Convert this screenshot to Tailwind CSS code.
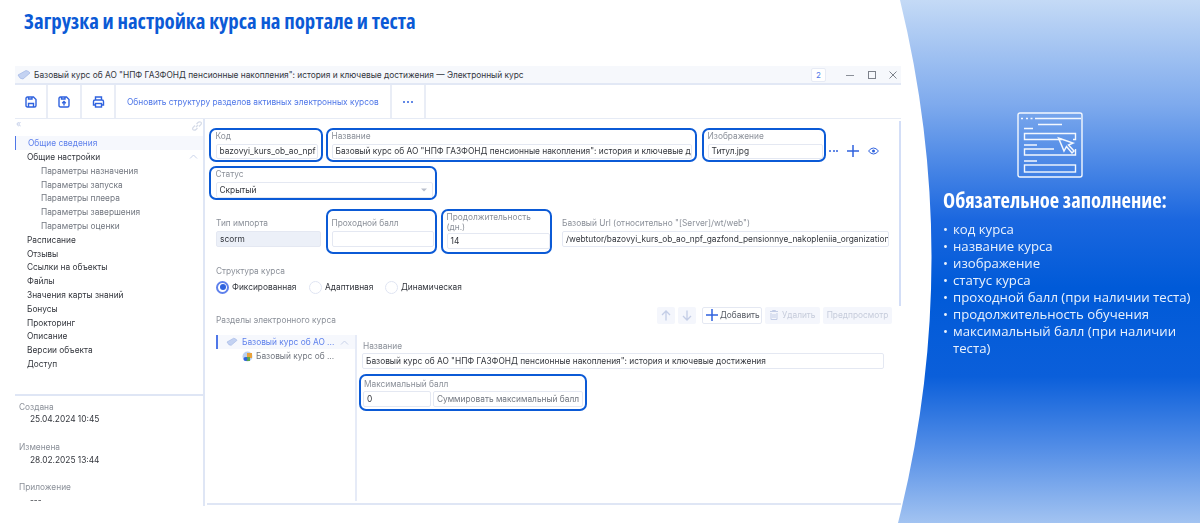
<!DOCTYPE html>
<html lang="ru"><head><meta charset="utf-8"><script src="https://cdn.jsdelivr.net/npm/@tailwindcss/browser@4"></script></head>
<body class="m-0">
<div class="relative w-[1200px] h-[523px] overflow-hidden bg-white font-['Inter','Liberation_Sans',sans-serif] text-[8.33px] leading-[14px] text-[#33363d]">
  <h1 class="absolute left-[24px] top-[7px] m-0 font-['Open_Sans',sans-serif] font-bold text-[20.8px] leading-[28px] text-[#0b5ad6] whitespace-nowrap [font-stretch:75%]">Загрузка и настройка курса на портале и теста</h1>

  <div class="absolute left-[15px] top-[66px] w-[886px] h-[440px] flex flex-col blur-[0.3px]">
    <!-- title bar -->
    <div class="h-[19px] shrink-0 bg-[#f6f8fc] border-b-2 border-[#e2e8f5] flex items-center">
      <svg class="ml-[2px] w-[14px] h-[12px]" viewBox="0 0 14 12"><path d="M1 6 L9 1.5 Q12 2 13 4 L6 10 Q3 10.5 1 6Z" fill="#c3d2f2" stroke="#9fb4e4" stroke-width=".7"/></svg>
      <span class="ml-[3px] text-[#33363d] whitespace-nowrap">Базовый курс об АО "НПФ ГАЗФОНД пенсионные накопления": история и ключевые достижения — Электронный курс</span>
      <div class="ml-auto mr-[2px] flex items-center">
        <span class="w-[15px] h-[14px] mr-[19px] flex items-center justify-center bg-white border border-[#e7ebf5] rounded-[2px] text-[#4f77e8] text-[8px]">2</span>
        <svg class="w-[10px] h-[10px] mr-[12px]" viewBox="0 0 10 10"><path d="M1 5.5H9" stroke="#8b9099" fill="none"/></svg>
        <svg class="w-[10px] h-[10px] mr-[11px]" viewBox="0 0 10 10"><rect x="1.5" y="1.5" width="7" height="7" stroke="#7d828b" fill="none"/></svg>
        <svg class="w-[10px] h-[10px] mr-[1px]" viewBox="0 0 10 10"><path d="M1.5 1.5L8.5 8.5M8.5 1.5L1.5 8.5" stroke="#7d828b" fill="none"/></svg>
      </div>
    </div>
    <!-- toolbar -->
    <div class="h-[34px] shrink-0 border-b border-[#e6ebf5] flex items-stretch text-[#4f77e8]">
      <div class="w-[33px] border-r-2 border-[#e9edf6] flex items-center justify-center">
        <svg class="w-[12px] h-[12px]" viewBox="0 0 12 12" fill="none" stroke="#2f62de" stroke-width="1.4"><path d="M1 2.5Q1 1 2.5 1H8.5L11 3.5V9.5Q11 11 9.5 11H2.5Q1 11 1 9.5Z"/><path d="M3.5 11V7.5H8.5V11M3.5 1V3H7V1"/></svg>
      </div>
      <div class="w-[34px] border-r-2 border-[#e9edf6] flex items-center justify-center">
        <svg class="w-[12px] h-[12px]" viewBox="0 0 12 12" fill="none" stroke="#2f62de" stroke-width="1.4"><path d="M1 2.5Q1 1 2.5 1H8.5L11 3.5V9.5Q11 11 9.5 11H2.5Q1 11 1 9.5Z"/><path d="M3.5 1V3H7V1M6 9.5V5.5M4.2 7.2L6 5.500L7.800 7.200"/></svg>
      </div>
      <div class="w-[34px] border-r-2 border-[#e9edf6] flex items-center justify-center">
        <svg class="w-[13px] h-[12px]" viewBox="0 0 13 12" fill="none" stroke="#2f62de" stroke-width="1.4"><path d="M3.5 4V1H9.5V4M3.5 9H1.5V5.5Q1.5 4 3 4H10Q11.5 4 11.5 5.5V9H9.5"/><rect x="3.5" y="7.5" width="6" height="3.5"/></svg>
      </div>
      <div class="w-[276px] border-r-2 border-[#e9edf6] flex items-center pl-[11px] whitespace-nowrap">Обновить структуру разделов активных электронных курсов</div>
      <div class="w-[34px] border-r-2 border-[#e9edf6] flex items-center justify-center gap-[2px]">
        <i class="w-[2px] h-[2px] bg-[#2f62de] rounded-full"></i><i class="w-[2px] h-[2px] bg-[#2f62de] rounded-full"></i><i class="w-[2px] h-[2px] bg-[#2f62de] rounded-full"></i>
      </div>
    </div>
    <!-- body -->
    <div class="flex-1 flex min-h-0">
      <!-- sidebar -->
      <aside class="w-[190px] shrink-0 border-r-2 border-[#dfe6f5] flex flex-col overflow-hidden">
        <div class="h-[17px] shrink-0 relative">
          <span class="absolute left-[1px] top-[-2px] text-[#c2cde8] text-[9px]">«</span>
          <svg class="absolute left-[176px] top-[1px] w-[12px] h-[12px]" viewBox="0 0 12 12" fill="none" stroke="#d5dbe8" stroke-width="1.2"><path d="M5 7L7 5M4 5.5L2 7.5Q1 9.5 2.5 10T5 9.5L6.5 8M8 6.5L10 4.5Q11 2.5 9.5 2T7 2.5L5.5 4"/></svg>
        </div>
        <nav class="flex flex-col text-[#33363d] h-[258px]">
          <div class="h-[14px] shrink-0 pl-[12px] border-l border-[#4f77e8] bg-[#f6f8fd] text-[#5f81ec]">Общие сведения</div>
          <div class="h-[13.8px] shrink-0 pl-[12px] flex justify-between pr-[5px]"><span>Общие настройки</span><svg class="w-[9px] h-[13px]" viewBox="0 0 9 13" fill="none" stroke="#c9d3ea"><path d="M1 8.5L4.5 5L8 8.5"/></svg></div>
          <div class="h-[13.8px] shrink-0 pl-[26px] text-[#71767f]">Параметры назначения</div>
          <div class="h-[13.8px] shrink-0 pl-[26px] text-[#71767f]">Параметры запуска</div>
          <div class="h-[13.8px] shrink-0 pl-[26px] text-[#71767f]">Параметры плеера</div>
          <div class="h-[13.8px] shrink-0 pl-[26px] text-[#71767f]">Параметры завершения</div>
          <div class="h-[13.8px] shrink-0 pl-[26px] text-[#71767f]">Параметры оценки</div>
          <div class="h-[13.8px] shrink-0 pl-[12px]">Расписание</div>
          <div class="h-[13.8px] shrink-0 pl-[12px]">Отзывы</div>
          <div class="h-[13.8px] shrink-0 pl-[12px]">Ссылки на объекты</div>
          <div class="h-[13.8px] shrink-0 pl-[12px]">Файлы</div>
          <div class="h-[13.8px] shrink-0 pl-[12px]">Значения карты знаний</div>
          <div class="h-[13.8px] shrink-0 pl-[12px]">Бонусы</div>
          <div class="h-[13.8px] shrink-0 pl-[12px]">Прокторинг</div>
          <div class="h-[13.8px] shrink-0 pl-[12px]">Описание</div>
          <div class="h-[13.8px] shrink-0 pl-[12px]">Версии объекта</div>
          <div class="h-[13.8px] shrink-0 pl-[12px]">Доступ</div>
        </nav>
        <div class="flex-1 border-t-2 border-[#dfe6f5] pt-[4px] pl-[4px] overflow-hidden">
          <div class="text-[#8b9099]">Создана</div>
          <div class="pl-[11px] mt-[-2px] h-[28px]">25.04.2024 10:45</div>
          <div class="text-[#8b9099]">Изменена</div>
          <div class="pl-[11px] mt-[-1px] h-[27px]">28.02.2025 13:44</div>
          <div class="text-[#8b9099]">Приложение</div>
          <div class="pl-[11px] mt-[-1px]">---</div>
        </div>
      </aside>
      <!-- main -->
      <main class="relative flex-1 min-w-0 pt-[9px] pl-[4px]">
        <!-- scrollbar -->
        <div class="absolute right-0 top-[2px] w-[2px] h-[185px] bg-[#d3def7]"></div>
        <!-- row 1 -->
        <div class="flex items-start">
          <div class="w-[114px] h-[34px] border-[2.5px] border-[#0b5ad6] rounded-[7px] pl-[4.5px] pr-[3.5px]">
            <div class="text-[#8b9099] h-[13.5px] leading-[12px]">Код</div>
            <div class="h-[15px] border border-[#e4e8f2] rounded-[2px] pl-[3px] leading-[13px] overflow-hidden whitespace-nowrap">bazovyi_kurs_ob_ao_npf</div>
          </div>
          <div class="w-[371px] ml-[3px] h-[34px] border-[2.5px] border-[#0b5ad6] rounded-[7px] pl-[3.5px] pr-[3.5px]">
            <div class="text-[#8b9099] h-[13.5px] leading-[12px]">Название</div>
            <div class="h-[15px] border border-[#e4e8f2] rounded-[2px] pl-[3px] leading-[13px] overflow-hidden whitespace-nowrap">Базовый курс об АО "НПФ ГАЗФОНД пенсионные накопления": история и ключевые достижения</div>
          </div>
          <div class="w-[124px] ml-[5px] h-[34px] border-[2.5px] border-[#0b5ad6] rounded-[7px] pl-[3.5px] pr-[1.5px]">
            <div class="text-[#8b9099] h-[13.5px] leading-[12px]">Изображение</div>
            <div class="h-[15px] border border-[#e4e8f2] rounded-[2px] pl-[3px] leading-[13px] overflow-hidden whitespace-nowrap">Титул.jpg</div>
          </div>
          <div class="flex items-center h-[34px] pt-[11px]">
            <span class="ml-[3px] flex gap-[1.5px]"><i class="w-[2px] h-[2px] bg-[#2f62de] rounded-full"></i><i class="w-[2px] h-[2px] bg-[#2f62de] rounded-full"></i><i class="w-[2px] h-[2px] bg-[#2f62de] rounded-full"></i></span>
            <svg class="ml-[9px] w-[12px] h-[12px]" viewBox="0 0 12 12"><path d="M6 0V12M0 6H12" stroke="#2f62de" stroke-width="1.5"/></svg>
            <svg class="ml-[9px] w-[11px] h-[8px]" viewBox="0 0 11 8" fill="none" stroke="#2f62de"><path d="M.5 4Q5.5-2 10.5 4Q5.5 10 .5 4Z"/><circle cx="5.5" cy="4" r="1.5" fill="#2f62de" stroke="none"/></svg>
          </div>
        </div>
        <!-- row 2 -->
        <div class="mt-[4px] w-[228px] h-[34px] border-[2.5px] border-[#0b5ad6] rounded-[7px] pl-[4.5px] pr-[2.5px] pt-[1px]">
          <div class="text-[#8b9099] h-[12.5px] leading-[11px]">Статус</div>
          <div class="h-[16px] border border-[#e4e8f2] rounded-[2px] pl-[3px] leading-[14px] flex justify-between items-center pr-[5px]"><span>Скрытый</span><svg class="w-[6px] h-[4px]" viewBox="0 0 6 4"><path d="M0 .5H6L3 3.5Z" fill="#b9bfcc"/></svg></div>
        </div>
        <!-- row 3 -->
        <div class="mt-[9px] flex items-start">
          <div class="w-[105px] ml-[7px] pt-[7px]">
            <div class="text-[#8b9099] h-[15px]">Тип импорта</div>
            <div class="h-[16px] bg-[#ecf0f8] border border-[#e4e8f2] rounded-[2px] pl-[3px] leading-[14px]">scorm</div>
          </div>
          <div class="w-[111px] ml-[5px] h-[45px] border-[2.5px] border-[#0b5ad6] rounded-[7px] pl-[3.5px] pr-[1.5px] pt-[4.5px]">
            <div class="text-[#8b9099] h-[15px]">Проходной балл</div>
            <div class="h-[16px] border border-[#e4e8f2] rounded-[2px]"></div>
          </div>
          <div class="w-[111px] ml-[4px] h-[45px] border-[2.5px] border-[#0b5ad6] rounded-[7px] pl-[3.5px] pr-[.5px] pt-[.5px]">
            <div class="text-[#8b9099] h-[21.5px] leading-[10.5px]">Продолжительность<br>(дн.)</div>
            <div class="h-[16px] border border-[#e4e8f2] rounded-[2px] pl-[3px] leading-[14px]">14</div>
          </div>
          <div class="w-[327px] ml-[10px] pt-[7px]">
            <div class="text-[#8b9099] h-[15px] whitespace-nowrap">Базовый Url (относительно "[Server]/wt/web")</div>
            <div class="h-[16px] border border-[#e4e8f2] rounded-[2px] pl-[3px] leading-[14px] overflow-hidden whitespace-nowrap">/webtutor/bazovyi_kurs_ob_ao_npf_gazfond_pensionnye_nakopleniia_organization</div>
          </div>
        </div>
        <!-- radios -->
        <div class="ml-[7px] mt-[10px]">
          <div class="text-[#8b9099] h-[14px]">Структура курса</div>
          <div class="flex items-center h-[16px] mt-[1px]">
            <span class="w-[13px] h-[13px] rounded-full border-2 border-[#5f81ec] flex items-center justify-center"><i class="w-[6px] h-[6px] rounded-full bg-[#2f62de]"></i></span>
            <span class="ml-[3px] w-[77px]">Фиксированная</span>
            <span class="w-[13px] h-[13px] rounded-full border border-[#dfe4f2]"></span>
            <span class="ml-[3px] w-[60px]">Адаптивная</span>
            <span class="w-[13px] h-[13px] rounded-full border border-[#dfe4f2]"></span>
            <span class="ml-[3px]">Динамическая</span>
          </div>
        </div>
        <!-- sections head -->
        <div class="mt-[11px] h-[18px] flex items-center ml-[7px]">
          <span class="text-[#8b9099] mt-[10px]">Разделы электронного курса</span>
          <div class="ml-auto mr-[9px] flex text-[#c6ccdb]">
            <span class="w-[18px] h-[17px] bg-[#f4f6fc] rounded-[2px] flex items-center justify-center"><svg class="w-[10px] h-[11px]" viewBox="0 0 10 11" fill="none" stroke="#c3cde6" stroke-width="1.3"><path d="M5 10.5V1M1 5L5 1L9 5"/></svg></span>
            <span class="ml-[3px] w-[18px] h-[17px] bg-[#f4f6fc] rounded-[2px] flex items-center justify-center"><svg class="w-[10px] h-[11px]" viewBox="0 0 10 11" fill="none" stroke="#c3cde6" stroke-width="1.3"><path d="M5 .5V10M1 6L5 10L9 6"/></svg></span>
            <span class="ml-[6px] w-[60px] h-[17px] bg-white border border-[#e4e8f2] rounded-[2px] flex items-center pl-[3px] text-[#565b64]"><svg class="w-[12px] h-[12px] mr-[2px]" viewBox="0 0 12 12"><path d="M6 0V12M0 6H12" stroke="#2f62de" stroke-width="1.5"/></svg>Добавить</span>
            <span class="ml-[3px] w-[55px] h-[17px] bg-[#f4f6fc] rounded-[2px] flex items-center pl-[5px]"><svg class="w-[8px] h-[10px] mr-[4px]" viewBox="0 0 8 10" fill="none" stroke="#c3cde6"><path d="M0 1.5H8M2.5 1.5V.5H5.500V1.500M1 3V9.500H7V3M3 4V8M5 4V8"/></svg>Удалить</span>
            <span class="ml-[3px] w-[69px] h-[17px] bg-[#f4f6fc] rounded-[2px] flex items-center justify-center">Предпросмотр</span>
          </div>
        </div>
        <!-- sections body -->
        <div class="ml-[7px] mt-[11px] flex h-[166px]">
          <div class="w-[141px] shrink-0 border-r-2 border-[#e6ebf7]">
            <div class="h-[14px] bg-[#f6f8fd] border-l-2 border-[#4f77e8] flex items-center text-[#5f81ec] whitespace-nowrap">
              <svg class="ml-[8px] w-[12px] h-[10px]" viewBox="0 0 14 12"><path d="M1 6 L9 1.5 Q12 2 13 4 L6 10 Q3 10.5 1 6Z" fill="#c3d2f2" stroke="#9fb4e4" stroke-width=".7"/></svg>
              <span class="ml-[4px]">Базовый курс об АО ...</span>
              <svg class="ml-[6px] w-[9px] h-[9px]" viewBox="0 0 9 9" fill="none" stroke="#c9d3ea"><path d="M1 6.5L4.5 3L8 6.5"/></svg>
            </div>
            <div class="h-[14px] flex items-center text-[#71767f] whitespace-nowrap">
              <svg class="ml-[26px] w-[11px] h-[11px]" viewBox="0 0 11 11"><circle cx="5.5" cy="5.5" r="5" fill="#bcd0ef"/><path d="M5 2H10V7H5Z" fill="#e9a23b"/><path d="M4 6H8V10H4Z" fill="#5aa84a"/><circle cx="3.5" cy="8" r="2" fill="#2f62de"/></svg>
              <span class="ml-[3px]">Базовый курс об ...</span>
            </div>
          </div>
          <div class="flex-1 pl-[3px]">
            <div class="ml-[3px] mt-[4px] text-[#8b9099] h-[14px]">Название</div>
            <div class="w-[522px] h-[16px] ml-[2px] border border-[#e4e8f2] rounded-[2px] pl-[3px] leading-[14px] whitespace-nowrap overflow-hidden">Базовый курс об АО "НПФ ГАЗФОНД пенсионные накопления": история и ключевые достижения</div>
            <div class="mt-[5px] -ml-[1px] w-[228px] h-[37px] border-[2.5px] border-[#0b5ad6] rounded-[7px] pl-[2px] pt-[1.5px]">
              <div class="text-[#8b9099] h-[13.5px] leading-[13px] pl-[1px]">Максимальный балл</div>
              <div class="flex">
                <div class="w-[68px] h-[16px] border border-[#e4e8f2] rounded-[2px] pl-[3px] leading-[14px]">0</div>
                <div class="ml-[2px] w-[150px] h-[16px] border border-[#e4e8f2] rounded-[2px] text-center leading-[14px] text-[#71767f] whitespace-nowrap">Суммировать максимальный балл</div>
              </div>
            </div>
          </div>
        </div>
        <div class="absolute left-[2px] bottom-[1px] right-0 h-[2px] bg-[#dfe6f5]"></div>
      </main>
    </div>
  </div>

  <!-- right panel -->
  <div class="absolute left-[896px] top-0 w-[304px] h-[523px]">
    <svg class="absolute inset-0 w-[304px] h-[523px]" viewBox="0 0 304 523">
      <defs><linearGradient id="g" x1="0" y1="0" x2="0" y2="1">
        <stop offset="0" stop-color="#c4daf6"/><stop offset=".2" stop-color="#7eaaed"/><stop offset=".42" stop-color="#1b67df"/><stop offset=".55" stop-color="#005ad8"/><stop offset=".72" stop-color="#0b5fda"/><stop offset=".85" stop-color="#4f8be6"/><stop offset="1" stop-color="#a2c3f1"/>
      </linearGradient></defs>
      <path d="M4 0Q68 262 2 523H304V0Z" fill="url(#g)"/>
    </svg>
    <div class="relative pl-[47px] pt-[112px] text-white font-['Open_Sans',sans-serif]">
      <svg class="ml-[74px] block w-[66px] h-[66px]" viewBox="0 0 66 66" fill="none" stroke="#f4f8fe" stroke-width="1.4">
        <rect x="1" y="1" width="64" height="64" rx="2"/>
        <path d="M4 6.5H6M9 6.5H11M13.500 6.500H15.500M18 6.500H64M21 12.500H45M7 16.500H16"/>
        <path d="M45 27.500H7.500V21.500H58.500V27.500H56"/>
        <path d="M7 33H20M7 49H20"/>
        <path d="M37 37H7.500V43H58.500V37"/>
        <rect x="7.500" y="53" width="51" height="7"/>
        <path d="M41.500 26L47 39L49.500 34.500L55 41L57 39L51.500 33L56 31Z" stroke-width="1.500"/>
      </svg>
      <div class="mt-[9px] font-bold text-[20.5px] leading-[26px] whitespace-nowrap [font-stretch:75%]">Обязательное заполнение:</div>
      <ul class="mt-[8px] list-none m-0 p-0 text-[13.2px] leading-[17px] text-[#eaf2fd]">
        <li class="flex"><span class="w-[10px] shrink-0">•</span><span>код курса</span></li>
        <li class="flex"><span class="w-[10px] shrink-0">•</span><span>название курса</span></li>
        <li class="flex"><span class="w-[10px] shrink-0">•</span><span>изображение</span></li>
        <li class="flex"><span class="w-[10px] shrink-0">•</span><span>статус курса</span></li>
        <li class="flex"><span class="w-[10px] shrink-0">•</span><span class="whitespace-nowrap">проходной балл (при наличии теста)</span></li>
        <li class="flex"><span class="w-[10px] shrink-0">•</span><span>продолжительность обучения</span></li>
        <li class="flex"><span class="w-[10px] shrink-0">•</span><span class="w-[240px]">максимальный балл (при наличии теста)</span></li>
      </ul>
    </div>
  </div>
</div>
</body></html>
